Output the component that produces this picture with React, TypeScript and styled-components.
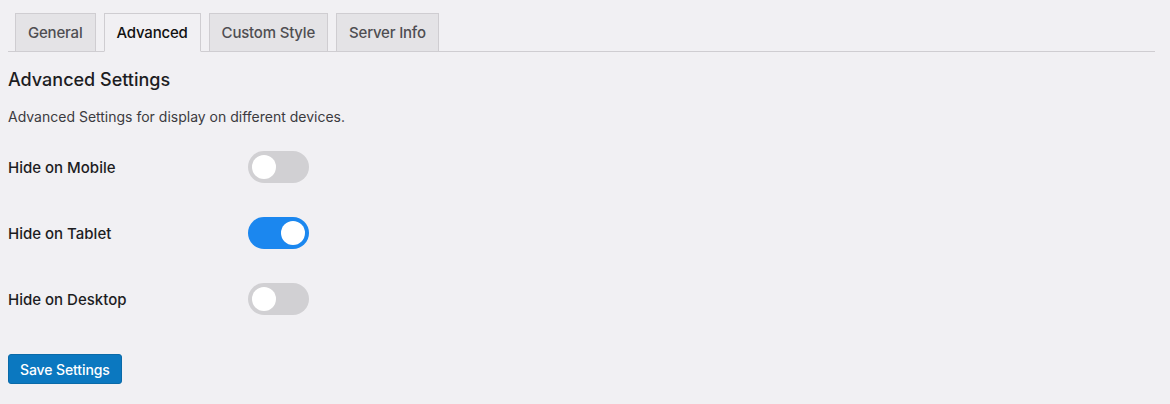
import React, { useState } from "react";
import styled, { createGlobalStyle } from "styled-components";

const Global = createGlobalStyle`
  html, body { margin: 0; padding: 0; background: #f1f0f3; }
  body { font-family: Inter, "Liberation Sans", Arial, sans-serif; color: #1d2327; }
`;

const Page = styled.div`
  padding: 13px 15px 0 8px;
  width: 1170px;
  box-sizing: border-box;
`;

const TabBar = styled.nav`
  display: flex;
  gap: 8px;
  padding-left: 7px;
  border-bottom: 1px solid #cfcdd1;
`;

const Tab = styled.button<{ $active?: boolean }>`
  height: 39px;
  box-sizing: border-box;
  padding: 0 12px;
  margin-bottom: -1px;
  border: 1px solid #cfcdd1;
  border-bottom: 1px solid ${(p) => (p.$active ? "#f1f0f3" : "#cfcdd1")};
  background: ${(p) => (p.$active ? "#f1f0f3" : "#e4e3e6")};
  color: ${(p) => (p.$active ? "#111" : "#4f4e52")};
  font-family: inherit;
  font-size: 15px;
  font-weight: 500;
  letter-spacing: -0.2px;
  cursor: pointer;
`;

const Heading = styled.h2`
  margin: 17px 0 0;
  font-size: 18px;
  font-weight: 500;
  color: #1d1d1f;
  line-height: 22px;
`;

const Desc = styled.p`
  margin: 17px 0 0;
  font-size: 14px;
  color: #3c3b3f;
  line-height: 18px;
`;

const Rows = styled.div`
  display: flex;
  flex-direction: column;
  gap: 34px;
  margin-top: 25px;
`;

const Row = styled.div`
  display: grid;
  grid-template-columns: 240px 61px;
  align-items: center;
  height: 32px;
`;

const Label = styled.span`
  font-size: 15px;
  font-weight: 500;
  color: #1d1d1f;
`;

const Switch = styled.button<{ $on: boolean }>`
  position: relative;
  width: 61px;
  height: 32px;
  border: none;
  padding: 0;
  border-radius: 16px;
  background: ${(p) => (p.$on ? "#1b87ef" : "#d1d0d3")};
  cursor: pointer;
  &::after {
    content: "";
    position: absolute;
    top: 4px;
    left: ${(p) => (p.$on ? "33px" : "4px")};
    width: 24px;
    height: 24px;
    border-radius: 50%;
    background: #fff;
  }
`;

const SaveButton = styled.button`
  margin-top: 39px;
  height: 30px;
  padding: 0 11px;
  border: 1px solid #0a6aa8;
  border-radius: 3px;
  background: #0b78c0;
  color: #fff;
  font-family: inherit;
  font-size: 14px;
  font-weight: 500;
  letter-spacing: -0.1px;
  cursor: pointer;
`;

const tabs = ["General", "Advanced", "Custom Style", "Server Info"];

export default function App() {
  const [state, setState] = useState({ mobile: false, tablet: true, desktop: false });
  const rows: { key: keyof typeof state; label: string }[] = [
    { key: "mobile", label: "Hide on Mobile" },
    { key: "tablet", label: "Hide on Tablet" },
    { key: "desktop", label: "Hide on Desktop" },
  ];
  return (
    <Page>
      <Global />
      <TabBar>
        {tabs.map((t) => (
          <Tab key={t} $active={t === "Advanced"}>
            {t}
          </Tab>
        ))}
      </TabBar>
      <Heading>Advanced Settings</Heading>
      <Desc>Advanced Settings for display on different devices.</Desc>
      <Rows>
        {rows.map((r) => (
          <Row key={r.key}>
            <Label>{r.label}</Label>
            <Switch
              $on={state[r.key]}
              aria-label={r.label}
              onClick={() => setState((s) => ({ ...s, [r.key]: !s[r.key] }))}
            />
          </Row>
        ))}
      </Rows>
      <SaveButton>Save Settings</SaveButton>
    </Page>
  );
}
